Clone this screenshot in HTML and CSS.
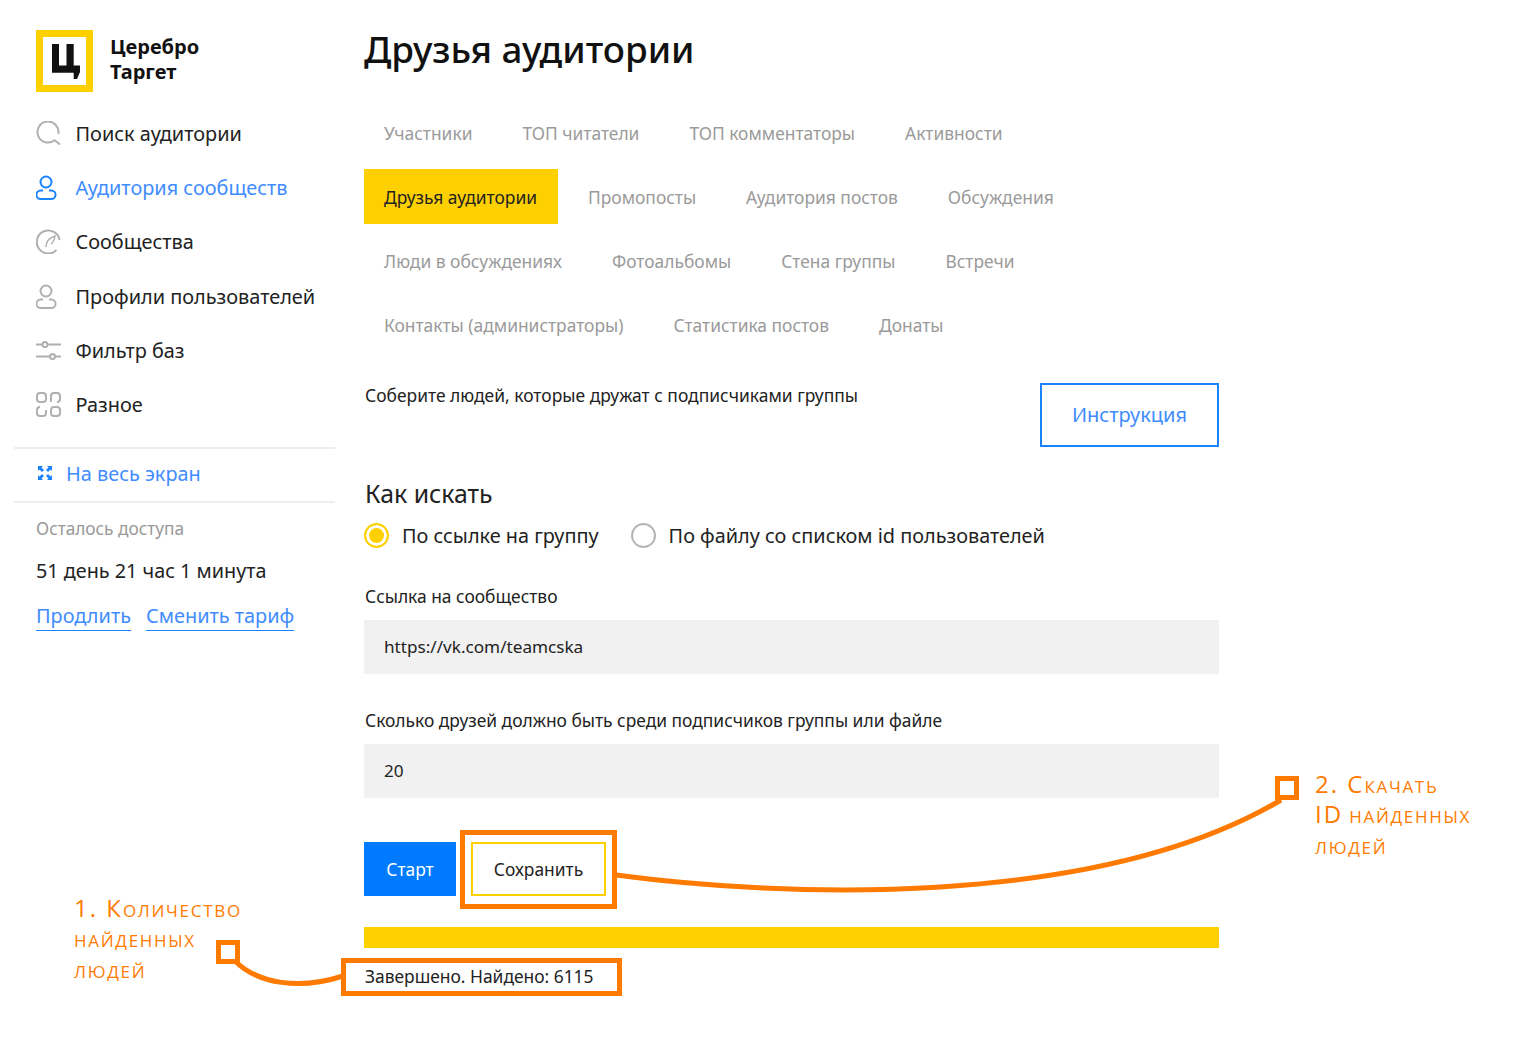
FILE: index.html
```html
<!DOCTYPE html>
<html lang="ru">
<head>
<meta charset="utf-8">
<title>Друзья аудитории</title>
<link rel="stylesheet" href="styles.css">
</head>
<body>
<div class="page">
  <aside class="sidebar">
    <div class="logo">
      <div class="logo-mark"><svg width="28" height="35" viewBox="0 0 28 35"><path d="M0 0H7V21.500H14.500V0H21.700V21.500H28V28L25 35H21.700V28.700H0Z" fill="#111"/></svg></div>
      <div class="logo-text">Церебро<br>Таргет</div>
    </div>
    <nav class="menu">
      <a class="menu-item"><svg class="ico" viewBox="0 0 25 25"><path d="M22.300 13A10.500 10.500 0 1 0 18.500 19.300L24 23.500"/></svg>Поиск аудитории</a>
      <a class="menu-item active"><svg class="ico" viewBox="0 0 25 25"><circle cx="10" cy="7" r="5.500"/><path d="M7 15.500H4.700a4.200 4.200 0 0 0 0 8.500H15.300a4.200 4.200 0 0 0 0-8.500H13"/></svg>Аудитория сообществ</a>
      <a class="menu-item"><svg class="ico" viewBox="0 0 25 25"><path d="M23.600 11A11.500 11.500 0 1 0 20.500 21"/><path class="thin" d="M10 18q0-8 9-11-1 6-4 8"/></svg>Сообщества</a>
      <a class="menu-item"><svg class="ico" viewBox="0 0 25 25"><circle cx="10" cy="7" r="5.500"/><path d="M7 15.500H4.700a4.200 4.200 0 0 0 0 8.500H15.300a4.200 4.200 0 0 0 0-8.500H13"/></svg>Профили пользователей</a>
      <a class="menu-item"><svg class="ico" viewBox="0 0 25 25"><path d="M0 6.500H6.500M11.500 6.500H25M0 18.500H14M19 18.500H25"/><circle cx="9" cy="6.500" r="2.500"/><circle cx="16.500" cy="18.500" r="2.500"/></svg>Фильтр баз</a>
      <a class="menu-item"><svg class="ico" viewBox="0 0 25 25"><rect x="1" y="1" width="9" height="9" rx="3"/><path d="M15 10V4a3 3 0 0 1 3-3h3a3 3 0 0 1 3 3v3a3 3 0 0 1-3 3"/><path d="M10 18v3a3 3 0 0 1-3 3H4a3 3 0 0 1-3-3v-3a3 3 0 0 1 3-3"/><rect x="15" y="15" width="9" height="9" rx="3"/></svg>Разное</a>
    </nav>
    <a class="fullscreen"><svg class="fs-ico" viewBox="0 0 16 16"><path d="M1 6V1h5L4.500 2.500 7 5 5 7 2.500 4.500zM15 6V1h-5l1.500 1.500L9 5l2 2 2.500-2.500zM1 10v5h5l-1.500-1.500L7 11 5 9l-2.500 2.500zM15 10v5h-5l1.500-1.500L9 11l2-2 2.500 2.500z"/></svg>На весь экран</a>
    <div class="access">
      <div class="access-label">Осталось доступа</div>
      <div class="access-time">51 день 21 час 1 минута</div>
      <div class="access-links"><a>Продлить</a><a>Сменить тариф</a></div>
    </div>
  </aside>
  <main class="content">
    <h1 class="title">Друзья аудитории</h1>
    <div class="tabs">
      <div class="tab-row"><a class="tab">Участники</a><a class="tab">ТОП читатели</a><a class="tab">ТОП комментаторы</a><a class="tab">Активности</a></div>
      <div class="tab-row"><a class="tab on">Друзья аудитории</a><a class="tab">Промопосты</a><a class="tab">Аудитория постов</a><a class="tab">Обсуждения</a></div>
      <div class="tab-row"><a class="tab">Люди в обсуждениях</a><a class="tab">Фотоальбомы</a><a class="tab">Стена группы</a><a class="tab">Встречи</a></div>
      <div class="tab-row"><a class="tab">Контакты (администраторы)</a><a class="tab">Статистика постов</a><a class="tab">Донаты</a></div>
    </div>
    <div class="intro">
      <p class="intro-text">Соберите людей, которые дружат с подписчиками группы</p>
      <a class="btn-outline">Инструкция</a>
    </div>
    <h2 class="subtitle">Как искать</h2>
    <div class="radios">
      <label class="radio"><span class="dot on"></span>По ссылке на группу</label>
      <label class="radio"><span class="dot"></span>По файлу со списком id пользователей</label>
    </div>
    <div class="field-label first">Ссылка на сообщество</div>
    <div class="input">https://vk.com/teamcska</div>
    <div class="field-label second">Сколько друзей должно быть среди подписчиков группы или файле</div>
    <div class="input">20</div>
    <div class="actions">
      <a class="btn-start">Старт</a>
      <a class="btn-save">Сохранить</a>
    </div>
    <div class="progress"></div>
    <div class="result">Завершено. Найдено: 6115</div>
  </main>
</div>
<svg class="overlay" width="1530" height="1050" viewBox="0 0 1530 1050">
  <g fill="none" stroke="#ff7a00" stroke-width="5">
    <rect x="462.500" y="832.500" width="152" height="74"/>
    <rect x="343.500" y="960.500" width="276" height="33"/>
    <rect x="218.500" y="942.500" width="19" height="19"/>
    <rect x="1277.500" y="778.500" width="19" height="19"/>
    <path d="M616 875C780 897 1095 910 1281 800"/>
    <path d="M235 961C258 984 300 990 343 976"/>
  </g>
</svg>
<div class="note note-1"><span class="big">1. К</span>оличество<br>найденных<br>людей</div>
<div class="note note-2"><span class="big">2. С</span>качать<br><span class="big">ID</span> найденных<br>людей</div>
</body>
</html>
```
FILE: styles.css
```css
* { box-sizing: border-box; }
html, body { margin: 0; padding: 0; background: #fff; }
body { font-family: "Noto Sans", "Open Sans", sans-serif; color: #222; width: 1530px; height: 1050px; overflow: hidden; position: relative; }
a { cursor: pointer; }
.page { display: flex; align-items: flex-start; }
.sidebar { width: 321px; margin-left: 14px; flex: none; }
.logo { display: flex; padding: 30px 0 0 22px; height: 106px; }
.logo-mark { width: 57px; height: 62px; border: 7px solid #ffd000; padding-left: 2px; display: flex; align-items: center; justify-content: center; background: #fff; }
.logo-text { margin: 4px 0 0 17px; font-size: 20px; line-height: 25px; font-weight: 700; color: #111; }
.menu { display: flex; flex-direction: column; padding: 0 0 15px 22px; border-bottom: 2px solid #eee; }
.menu-item { display: flex; align-items: center; height: 54.300px; font-size: 19.900px; color: #222; gap: 14.500px; }
.menu-item.active { color: #3f8cff; }
.ico { width: 25px; height: 25px; flex: none; fill: none; stroke: #b0b0b0; stroke-width: 2; }
.ico .thin { stroke-width: 1.500; }
.active .ico { stroke: #1a84ff; }
.fullscreen { display: flex; align-items: center; height: 54px; padding: 0 0 3px 23px; font-size: 19.900px; color: #3f8cff; border-bottom: 2px solid #eee; gap: 13px; }
.fs-ico { width: 16px; height: 16px; fill: #1a84ff; flex: none; }
.access { padding-left: 22px; }
.access-label { margin-top: 14px; font-size: 17.250px; line-height: 24px; color: #999; }
.access-time { margin-top: 16px; font-size: 19.800px; line-height: 28px; color: #222; }
.access-links { display: flex; gap: 15px; margin-top: 17px; font-size: 19.900px; line-height: 28px; color: #3f8cff; }
.access-links a { border-bottom: 1px solid #1a84ff; }
.content { width: 855px; margin-left: 29px; flex: none; }
.title { margin: 24px 0 0; font-size: 36.800px; line-height: 50px; font-weight: 500; color: #111; }
.tabs { margin-top: 31px; display: flex; flex-direction: column; gap: 9.300px; }
.tab-row { display: flex; gap: 10px; }
.tab { height: 55px; padding: 0 20px; display: flex; align-items: center; font-size: 17.400px; color: #9a9a9a; }
.tab.on { background: #ffd000; color: #222; padding-right: 21px; }
.intro { display: flex; justify-content: space-between; align-items: flex-start; margin-top: 30px; }
.intro-text { margin: 0; padding-left: 1px; font-size: 17.450px; line-height: 24px; color: #222; }
.btn-outline { width: 179px; height: 64px; border: 2px solid #1a84ff; display: flex; align-items: center; justify-content: center; font-size: 20px; color: #3f8cff; }
.subtitle { margin: 29px 0 0; padding-left: 1px; font-size: 24.800px; line-height: 34px; font-weight: 400; color: #222; }
.radios { display: flex; margin-top: 11px; gap: 32px; }
.radio { display: flex; align-items: center; gap: 13px; font-size: 19.850px; line-height: 30px; color: #222; }
.dot { width: 25px; height: 25px; border-radius: 50%; border: 2px solid #b5b5b5; background: #fff; }
.dot.on { border-color: #ffd000; background: #ffd000; box-shadow: inset 0 0 0 3px #fff; }
.field-label { padding-left: 1px; font-size: 17.400px; line-height: 24px; color: #222; }
.field-label.first { margin-top: 33px; }
.field-label.second { margin-top: 34px; }
.input { margin-top: 12px; height: 54px; background: #f1f1f1; padding-left: 20px; display: flex; align-items: center; font-size: 17.150px; color: #222; }
.actions { display: flex; align-items: center; margin-top: 44px; gap: 15px; }
.btn-start { width: 92px; height: 54px; background: #007bff; color: #fff; font-size: 17.400px; display: flex; align-items: center; justify-content: center; }
.btn-save { width: 135px; height: 54px; border: 2px solid #ffd000; color: #222; font-size: 17.400px; display: flex; align-items: center; justify-content: center; }
.progress { height: 21px; margin-top: 31px; background: #ffd000; }
.result { margin-top: 16px; padding-left: 1px; font-size: 17.400px; line-height: 24px; color: #222; }
.overlay { position: absolute; left: 0; top: 0; pointer-events: none; }
.note { position: absolute; color: #ff7a00; font-size: 17px; line-height: 30.400px; letter-spacing: 1.700px; text-transform: uppercase; font-family: "Open Sans", sans-serif; }
.note .big { font-size: 24px; line-height: 0; letter-spacing: 2px; }
.note-1 { left: 74px; top: 896px; }
.note-2 { left: 1315px; top: 772px; }
```
